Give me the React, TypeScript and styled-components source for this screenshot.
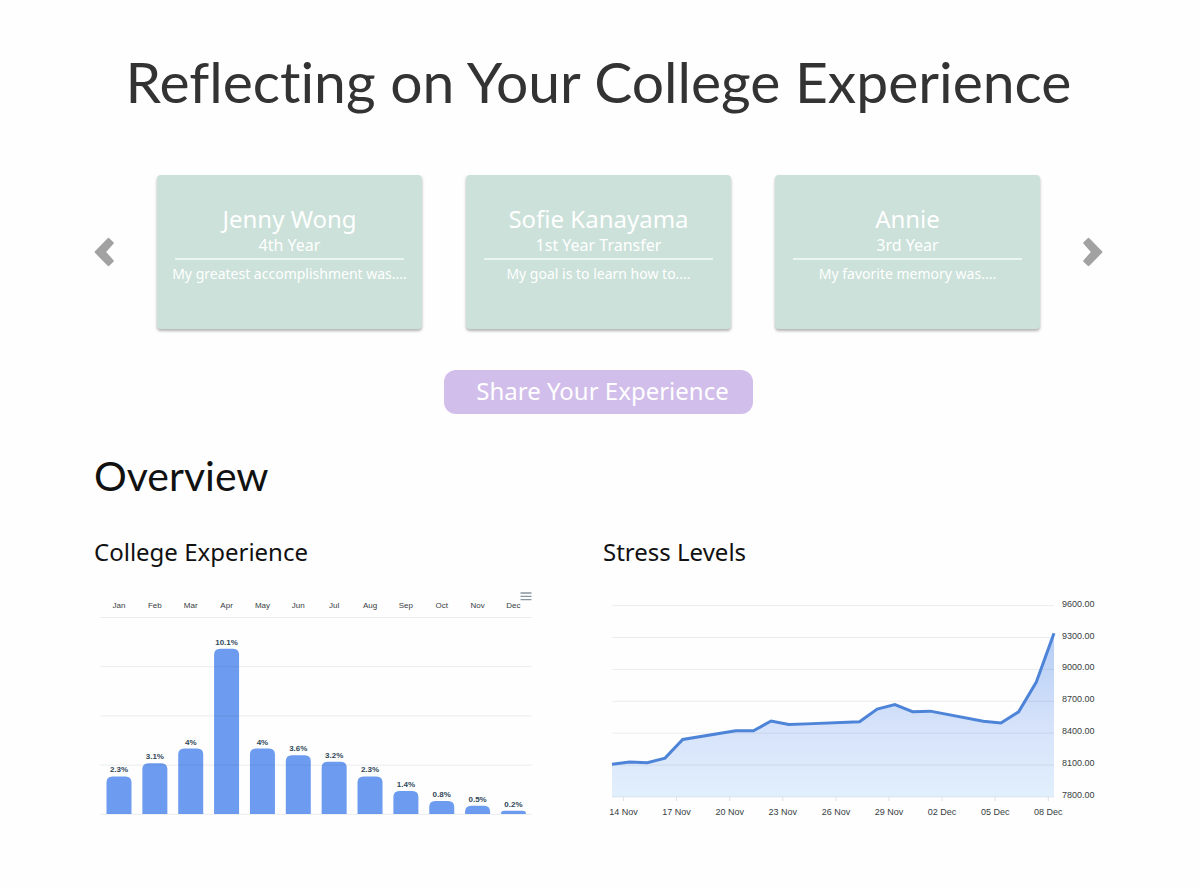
import React from "react";
import styled, { createGlobalStyle } from "styled-components";

const GlobalStyle = createGlobalStyle`
  *, *::before, *::after { box-sizing: border-box; }
  body {
    margin: 0;
    background: #fefefe;
    color: #111;
    font-family: "Noto Sans", "Open Sans", sans-serif;
  }
`;

const Page = styled.main`
  padding: 47px 97px 64px 94px;
`;

const Title = styled.h1`
  margin: 0;
  color: #333;
  font-family: Lato, sans-serif;
  font-size: 57px;
  font-variant-ligatures: none;
  font-weight: 400;
  line-height: 68px;
  text-align: center;
`;

const Carousel = styled.section`
  display: flex;
  align-items: center;
  gap: 43px;
  margin-top: 60px;
`;

const ArrowButton = styled.button`
  flex: none;
  width: 20px;
  padding: 0;
  border: 0;
  background: none;
  color: #a2a2a2;
  cursor: pointer;

  svg { display: block; }
`;

const Cards = styled.div`
  display: grid;
  flex: 1;
  grid-template-columns: repeat(3, 1fr);
  gap: 44px;
`;

const Card = styled.article`
  min-height: 154px;
  padding: 28px 12px 16px;
  border-radius: 4px;
  background: #cbe1d9;
  box-shadow: 0 2px 3px rgba(0, 0, 0, 0.3);
  color: #fff;
  text-align: center;
`;

const CardName = styled.h3`
  margin: 0;
  font-size: 24px;
  font-weight: 400;
  line-height: 32px;
`;

const CardYear = styled.p`
  margin: 0 6px;
  padding-bottom: 3px;
  border-bottom: 2px solid #eaf4f0;
  font-size: 16px;
  line-height: 20px;
`;

const CardQuote = styled.p`
  margin: 4px 0 0;
  font-size: 14px;
  line-height: 20px;
  white-space: nowrap;
`;

const ShareButton = styled.button`
  display: block;
  height: 44px;
  margin: 41px auto 0;
  padding: 0 24px 2px 32px;
  border: 0;
  border-radius: 12px;
  background: #d2beea;
  color: #fff;
  font: 400 24px/40px "Noto Sans", "Open Sans", sans-serif;
  cursor: pointer;
`;

const SectionTitle = styled.h2`
  margin: 36px 0 0;
  color: #111;
  font-family: Lato, sans-serif;
  font-size: 41px;
  font-weight: 400;
  line-height: 52px;
`;

const ChartGrid = styled.section`
  display: grid;
  grid-template-columns: 1fr 1fr;
  gap: 9px;
  margin-top: 34px;
`;

const ChartPanel = styled.div`
  min-width: 0;
`;

const ChartTitle = styled.h3`
  margin: 0 0 18px;
  font-size: 24px;
  font-weight: 400;
  line-height: 32px;
`;

const ChartBody = styled.div`
  position: relative;
`;

const ChartSvg = styled.svg`
  display: block;
  width: 100%;
  height: auto;
  overflow: visible;
  font-family: "Liberation Sans", Arial, sans-serif;
`;

const AxisText = styled.text<{ $size?: number }>`
  fill: #373d3f;
  font-size: ${(p) => p.$size ?? 9}px;
`;

const ValueText = styled.text`
  fill: #304758;
  font-size: 8px;
  font-weight: 700;
`;

const MenuButton = styled.button`
  position: absolute;
  top: 6px;
  right: 62px;
  padding: 0;
  border: 0;
  background: none;
  cursor: pointer;

  svg { display: block; }
`;

const stories = [
  { name: "Jenny Wong", year: "4th Year", quote: "My greatest accomplishment was...." },
  { name: "Sofie Kanayama", year: "1st Year Transfer", quote: "My goal is to learn how to...." },
  { name: "Annie", year: "3rd Year", quote: "My favorite memory was...." },
];

const months: [string, number][] = [
  ["Jan", 2.3], ["Feb", 3.1], ["Mar", 4], ["Apr", 10.1], ["May", 4], ["Jun", 3.6],
  ["Jul", 3.2], ["Aug", 2.3], ["Sep", 1.4], ["Oct", 0.8], ["Nov", 0.5], ["Dec", 0.2],
];

function Chevron({ d }: { d: string }) {
  return (
    <svg width="20" height="30" viewBox="0 0 20 30" fill="currentColor" stroke="currentColor" strokeWidth="2.4" strokeLinejoin="round">
      <path d={d} />
    </svg>
  );
}

const BAR_BASE = 228;
const PER_CENT = 16.35;

function BarChart() {
  return (
    <ChartSvg viewBox="0 0 500 240" role="img" aria-label="College experience by month">
      {months.map(([month, value], i) => {
        const x = 25 + i * 35.86;
        const h = value * PER_CENT;
        const r = Math.min(6, h);
        const top = BAR_BASE - h;
        return (
          <g key={month} textAnchor="middle">
            <AxisText x={x} y={22} $size={8}>{month}</AxisText>
            <path
              fill="#6c9bef"
              d={`M${x - 12.5} ${BAR_BASE}V${top + r}q0 ${-r} ${r} ${-r}h${25 - 2 * r}q${r} 0 ${r} ${r}V${BAR_BASE}z`}
            />
            <ValueText x={x} y={top - 4}>{value}%</ValueText>
          </g>
        );
      })}
      {[0, 1, 2, 3, 4].map((i) => (
        <line key={i} x1="6" x2="438" y1={31.5 + i * 49.2} y2={31.5 + i * 49.2} stroke="#405060" strokeOpacity="0.1" />
      ))}
    </ChartSvg>
  );
}

const levels: [number, number][] = [
  [0, 8107.85], [1, 8128], [2, 8122.9], [3, 8165.5], [4, 8340.7], [7, 8423.7], [8, 8423.5],
  [9, 8514.3], [10, 8481.85], [11, 8487.7], [14, 8506.9], [15, 8626.2], [16, 8668.95],
  [17, 8602.3], [18, 8607.55], [21, 8512.9], [22, 8496.25], [23, 8600.65], [24, 8881.1], [25, 9340.85],
];
const ticks = ["14 Nov", "17 Nov", "20 Nov", "23 Nov", "26 Nov", "29 Nov", "02 Dec", "05 Dec", "08 Dec"];

const dayX = (day: number) => 9 + day * 17.68;
const levelY = (level: number) => 211 - ((level - 7800) * 31.9) / 300;

function AreaChart() {
  const points = levels.map(([d, v]) => `${dayX(d)},${levelY(v)}`);
  return (
    <ChartSvg viewBox="0 0 500 240" role="img" aria-label="Stress levels from 14 November to 8 December">
      <defs>
        <linearGradient id="area" x1="0" y1="0" x2="0" y2="1">
          <stop offset="0" stopColor="#b4cdf5" />
          <stop offset="0.55" stopColor="#d5e2fa" />
          <stop offset="1" stopColor="#e2effc" />
        </linearGradient>
      </defs>
      <path fill="url(#area)" d={`M${dayX(0)},211L${points.join("L")}V211z`} />
      {[0, 1, 2, 3, 4, 5, 6].map((i) => {
        const level = 7800 + i * 300;
        return (
          <g key={level}>
            <line x1="9" x2="451" y1={levelY(level)} y2={levelY(level)} stroke="#405060" strokeOpacity="0.1" />
            <AxisText x={459} y={levelY(level) + 1}>{level}.00</AxisText>
          </g>
        );
      })}
      {ticks.map((label, i) => (
        <g key={label}>
          <line x1={20.5 + i * 53.1} x2={20.5 + i * 53.1} y1="211" y2="215" stroke="#dde2e6" />
          <AxisText x={20.5 + i * 53.1} y={229} textAnchor="middle">{label}</AxisText>
        </g>
      ))}
      <polyline points={points.join(" ")} fill="none" stroke="#4d84d8" strokeWidth="3" />
    </ChartSvg>
  );
}

export default function App() {
  return (
    <>
      <GlobalStyle />
      <Page>
        <Title>Reflecting on Your College Experience</Title>
        <Carousel aria-label="Student stories">
          <ArrowButton type="button" aria-label="Previous">
            <Chevron d="M1.8 15L14.5 2L18.6 6L10.6 15L18.6 24L14.5 28Z" />
          </ArrowButton>
          <Cards>
            {stories.map((s) => (
              <Card key={s.name}>
                <CardName>{s.name}</CardName>
                <CardYear>{s.year}</CardYear>
                <CardQuote>{s.quote}</CardQuote>
              </Card>
            ))}
          </Cards>
          <ArrowButton type="button" aria-label="Next">
            <Chevron d="M18.2 15L5.5 2L1.4 6L9.4 15L1.4 24L5.5 28Z" />
          </ArrowButton>
        </Carousel>
        <ShareButton type="button">Share Your Experience</ShareButton>
        <SectionTitle>Overview</SectionTitle>
        <ChartGrid>
          <ChartPanel>
            <ChartTitle>College Experience</ChartTitle>
            <ChartBody>
              <BarChart />
              <MenuButton type="button" aria-label="Chart menu">
                <svg width="12" height="9" viewBox="0 0 12 9" stroke="#8796a3" strokeWidth="1.3">
                  <path d="M0.5 1H11.5M0.5 4.3H11.5M0.5 7.6H11.5" />
                </svg>
              </MenuButton>
            </ChartBody>
          </ChartPanel>
          <ChartPanel>
            <ChartTitle>Stress Levels</ChartTitle>
            <ChartBody><AreaChart /></ChartBody>
          </ChartPanel>
        </ChartGrid>
      </Page>
    </>
  );
}
